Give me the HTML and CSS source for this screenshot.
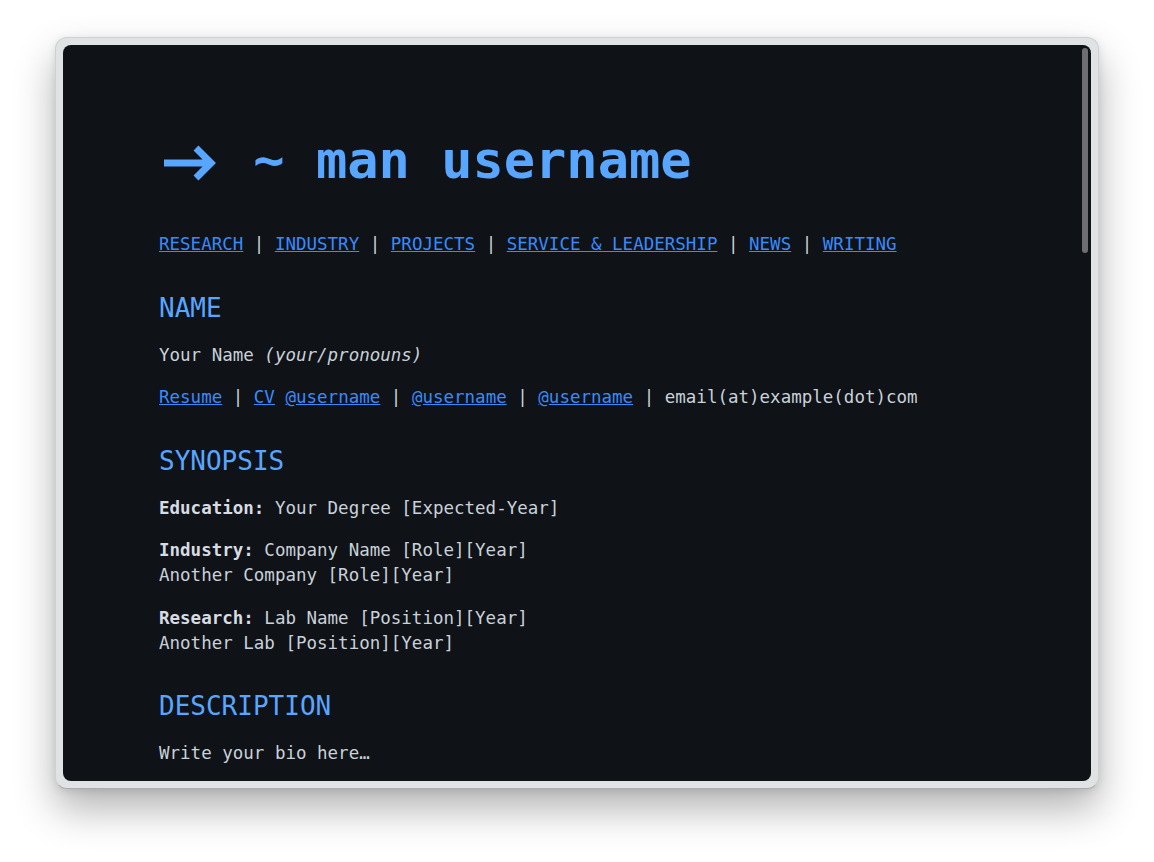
FILE: index.html
```html
<!DOCTYPE html>
<html lang="en">
<head>
<meta charset="utf-8">
<title>man username</title>
<link rel="stylesheet" href="styles.css">
</head>
<body>
<div class="window">
  <div class="screen">
    <div class="thumb"></div>
    <main class="page">
      <h1 class="title"><svg class="arrow" viewBox="0 0 63 44" width="63" height="44" role="img" aria-label="→"><path d="M5 22 H52 M37 7 L52 22 L37 37" fill="none" stroke="#58a6ff" stroke-width="7" stroke-linejoin="miter" stroke-linecap="butt"/></svg> ~ man username</h1>
      <p class="nav">
        <a href="#research">RESEARCH</a> | <a href="#industry">INDUSTRY</a> | <a href="#projects">PROJECTS</a> | <a href="#service">SERVICE &amp; LEADERSHIP</a> | <a href="#news">NEWS</a> | <a href="#writing">WRITING</a>
      </p>

      <h2 class="section">NAME</h2>
      <p>Your Name <em>(your/pronouns)</em></p>
      <p><a href="#">Resume</a> | <a href="#">CV</a> <a href="#">@username</a> | <a href="#">@username</a> | <a href="#">@username</a> | email(at)example(dot)com</p>

      <h2 class="section">SYNOPSIS</h2>
      <p><strong>Education:</strong> Your Degree [Expected-Year]</p>
      <p><strong>Industry:</strong> Company Name [Role][Year]<br>Another Company [Role][Year]</p>
      <p><strong>Research:</strong> Lab Name [Position][Year]<br>Another Lab [Position][Year]</p>

      <h2 class="section">DESCRIPTION</h2>
      <p>Write your bio here…</p>
    </main>
  </div>
</div>
</body>
</html>
```

FILE: styles.css
```css
html, body {
  margin: 0;
  background: #ffffff;
}

body {
  padding: 37px 0 73px 55px;
  font-family: "DejaVu Sans Mono", "Liberation Mono", monospace;
}

.window {
  box-sizing: border-box;
  width: 1044px;
  height: 752px;
  padding: 7px;
  background: #dfe3e3;
  border: 1px solid #cdd1d1;
  border-bottom-color: #a9adad;
  border-radius: 12px;
  box-shadow: 0 20px 40px rgba(0, 0, 0, 0.3), 0 2px 8px rgba(0, 0, 0, 0.1);
}

.screen {
  position: relative;
  height: 100%;
  background: #0f1217;
  border-radius: 8px;
  overflow: hidden;
}

.thumb {
  position: absolute;
  top: 3px;
  right: 3px;
  width: 6px;
  height: 205px;
  border-radius: 3px;
  background: #6c6e72;
}

.page {
  padding: 84px 96px 0 96px;
  color: #c9d1d9;
  font-size: 17.5px;
  line-height: 25px;
}

.title {
  margin: 0 0 40px 0;
  font-size: 52px;
  line-height: 63px;
  font-weight: bold;
  color: #58a6ff;
  white-space: nowrap;
}

.arrow {
  display: inline-block;
  vertical-align: top;
  margin-top: 12px;
}

.section {
  margin: 34.5px 0 19px 0;
  font-size: 26px;
  line-height: 32px;
  font-weight: normal;
  color: #58a6ff;
}

p {
  margin: 17.5px 0;
}

.nav {
  margin: 0;
}

a {
  color: #388bfd;
  text-decoration: underline;
}

em {
  font-style: italic;
}

strong {
  font-weight: bold;
  color: #d6dce2;
}
```
